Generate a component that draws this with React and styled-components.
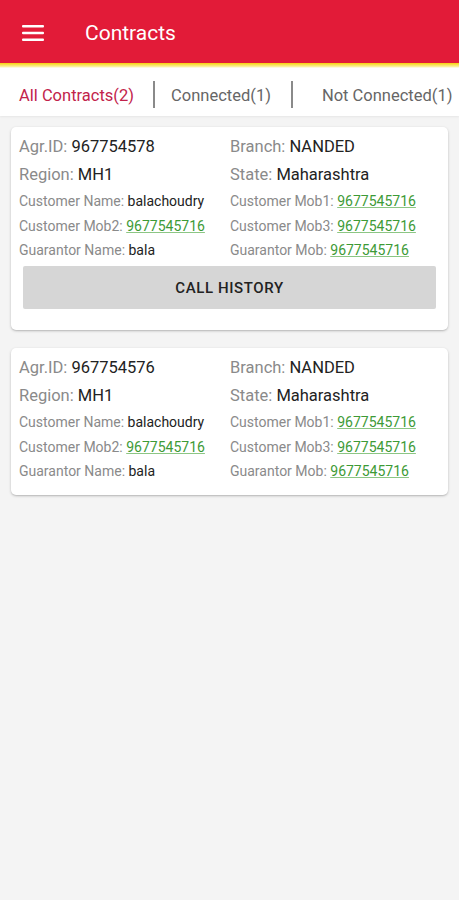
import React from 'react';
import styled, { createGlobalStyle } from 'styled-components';

const GlobalStyle = createGlobalStyle`
  html, body {
    margin: 0;
    padding: 0;
    background: #f4f4f4;
    font-family: Roboto, "Liberation Sans", Arial, sans-serif;
  }
  * { box-sizing: border-box; }
`;

const Screen = styled.div`
  width: 459px;
  min-height: 900px;
  background: #f4f4f4;
`;

const AppBar = styled.header`
  height: 63px;
  background: #e21b38;
  display: flex;
  align-items: center;
  padding: 3px 0 0 22px;
  gap: 41px;
  color: #fff;
`;

const Title = styled.h1`
  margin: 0;
  font-size: 21px;
  font-weight: 400;
`;

const Accent = styled.div`
  height: 5px;
  background: linear-gradient(#f6d20a, #fbef9a 70%, #ffffff);
`;

const Tabs = styled.nav`
  height: 48px;
  background: #fff;
  display: flex;
  align-items: center;
  padding: 4px 0 0 19px;
  box-shadow: 0 1px 2px rgba(0, 0, 0, 0.06);
`;

const Tab = styled.span`
  font-size: 16.5px;
  padding-top: 2px;
  color: ${({ $active }) => ($active ? '#c2234b' : '#666')};
  white-space: nowrap;
`;

const Divider = styled.span`
  width: 2px;
  height: 27px;
  background: #8a8a8a;
  margin: 0 ${({ $right }) => $right}px 0 ${({ $left }) => $left}px;
`;

const List = styled.main`
  padding: 11px 11px;
  display: flex;
  flex-direction: column;
  gap: 18px;
`;

const Card = styled.section`
  background: #fff;
  border-radius: 5px;
  box-shadow: 0 1px 3px rgba(0, 0, 0, 0.2), 0 1px 1px rgba(0, 0, 0, 0.08);
  padding: 6px 8px 11px;
`;

const Grid = styled.div`
  display: grid;
  grid-template-columns: 211px 1fr;
`;

const Field = styled.div`
  font-size: ${({ $big }) => ($big ? '16.5px' : '14px')};
  height: ${({ $big }) => ($big ? '28px' : '24.5px')};
  line-height: ${({ $big }) => ($big ? '28px' : '24px')};
  color: #8a8a8a;
  white-space: nowrap;
`;

const Value = styled.span`
  color: #222;
`;

const Phone = styled.a`
  color: #3d9a36;
  text-decoration: underline;
  text-decoration-color: #8cc684;
`;

const HistoryButton = styled.button`
  display: block;
  width: calc(100% - 8px);
  margin: 3.5px 4px 10px;
  height: 43px;
  border: none;
  border-radius: 2px;
  background: #d6d6d6;
  font-family: Roboto, "Liberation Sans", Arial, sans-serif;
  font-size: 15px;
  font-weight: 500;
  color: #222;
  letter-spacing: 0.6px;
`;

const MenuIcon = () => (
  <svg width="22" height="16" viewBox="0 0 22 16">
    <rect x="0" y="0" width="22" height="2.6" rx="1" fill="#fff" />
    <rect x="0" y="6.7" width="22" height="2.6" rx="1" fill="#fff" />
    <rect x="0" y="13.4" width="22" height="2.6" rx="1" fill="#fff" />
  </svg>
);

const contracts = [
  { id: '967754578', history: true },
  { id: '967754576', history: false },
];

const ContractCard = ({ id, history }) => (
  <Card>
    <Grid>
      <Field $big>Agr.ID: <Value>{id}</Value></Field>
      <Field $big>Branch: <Value>NANDED</Value></Field>
      <Field $big>Region: <Value>MH1</Value></Field>
      <Field $big>State: <Value>Maharashtra</Value></Field>
      <Field>Customer Name: <Value>balachoudry</Value></Field>
      <Field>Customer Mob1: <Phone>9677545716</Phone></Field>
      <Field>Customer Mob2: <Phone>9677545716</Phone></Field>
      <Field>Customer Mob3: <Phone>9677545716</Phone></Field>
      <Field>Guarantor Name: <Value>bala</Value></Field>
      <Field>Guarantor Mob: <Phone>9677545716</Phone></Field>
    </Grid>
    {history && <HistoryButton>CALL HISTORY</HistoryButton>}
  </Card>
);

export default function App() {
  return (
    <Screen>
      <GlobalStyle />
      <AppBar>
        <MenuIcon />
        <Title>Contracts</Title>
      </AppBar>
      <Accent />
      <Tabs>
        <Tab $active>All Contracts(2)</Tab>
        <Divider $left={19} $right={16} />
        <Tab>Connected(1)</Tab>
        <Divider $left={20} $right={29} />
        <Tab>Not Connected(1)</Tab>
      </Tabs>
      <List>
        {contracts.map((c) => (
          <ContractCard key={c.id} {...c} />
        ))}
      </List>
    </Screen>
  );
}
